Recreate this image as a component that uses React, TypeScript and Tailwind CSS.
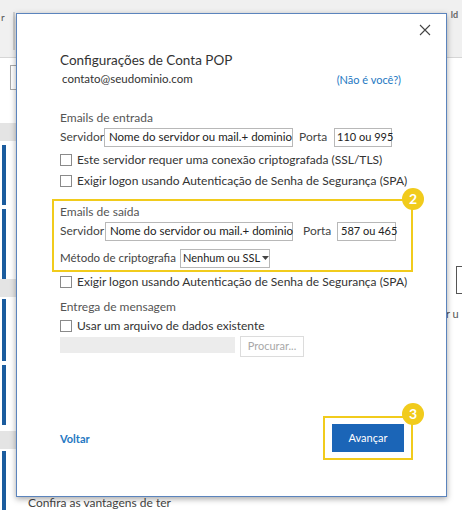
import React from "react";

const font = { fontFamily: 'Lato, "Open Sans", sans-serif' };

function Check({ label }: { label: string }) {
  return (
    <div className="flex h-[18px] items-center whitespace-nowrap">
      <div className="h-[12px] w-[12px] shrink-0 border border-[#8a8a8a] bg-white" />
      <span className="ml-[5px] text-[12px] text-[#333]">{label}</span>
    </div>
  );
}

function Badge({ n }: { n: string }) {
  return (
    <div className="flex h-[22px] w-[22px] items-center justify-center rounded-full bg-[#f1cb1c] text-[14px] font-bold leading-none text-white">
      {n}
    </div>
  );
}

export default function App() {
  return (
    <div className="relative h-[510px] w-[462px] overflow-hidden bg-white" style={font}>
      {/* background outlook window */}
      <div className="flex h-[58px] items-start border-b border-[#d6d6d6] bg-[#f0f0f0]">
        <span className="ml-[1px] mt-[10px] text-[10px] text-[#555]">r</span>
        <div className="ml-[8px] mt-[12px] h-[38px] w-[2px] bg-[#cfcfcf]" />
        <div className="ml-auto mr-[4px] mt-[8px] text-[9px] font-bold text-[#666]">ld</div>
      </div>
      <div className="flex">
        <div className="flex w-[16px] flex-col">
          <div className="ml-[10px] mt-[7px] h-[25px] w-[10px] border border-[#aaa] bg-white" />
          <div className="mt-[33px] h-[18px] bg-[#e4e4e4]" />
          <div className="ml-[2px] mt-[4px] h-[60px] w-[4px] bg-[#1b5c9e]" />
          <div className="ml-[2px] mt-[4px] h-[70px] w-[4px] bg-[#1b5c9e]" />
          <div className="h-[18px] bg-[#e4e4e4]" />
          <div className="ml-[2px] mt-[2px] h-[62px] w-[4px] bg-[#1b5c9e]" />
          <div className="ml-[2px] mt-[4px] h-[60px] w-[4px] bg-[#1b5c9e]" />
          <div className="mt-[6px] h-[18px] bg-[#e4e4e4]" />
          <div className="ml-[2px] mt-[2px] h-[60px] w-[4px] bg-[#1b5c9e]" />
        </div>
        <div className="flex-1" />
        <div className="flex w-[16px] flex-col">
          <div className="ml-[10px] mt-[208px] h-[28px] w-[10px] border border-r-0 border-[#555] bg-white" />
          <span className="mt-[12px] text-[11px] text-[#555]">r u</span>
        </div>
      </div>
      <div className="absolute left-[28px] top-[496px] whitespace-nowrap text-[12px] leading-[14px] text-[#444]">Confira as vantagens de ter</div>

      {/* dialog */}
      <div className="absolute left-[16px] top-[13px] flex h-[484px] w-[431px] flex-col border border-[#5b84bd] bg-white pl-[43px] shadow-[0_2px_6px_rgba(0,0,0,0.35)]">
        <div className="absolute right-[15px] top-[10px]">
          <svg width="12" height="12" viewBox="0 0 12 12">
            <path d="M1 1 L11 11 M11 1 L1 11" stroke="#444" strokeWidth="1.1" fill="none" />
          </svg>
        </div>
        <div className="mt-[36px] h-[20px] whitespace-nowrap text-[13.5px] leading-[20px] text-[#333]">Configurações de Conta POP</div>
        <div className="mt-[1px] flex h-[16px] items-center whitespace-nowrap pr-[45px]">
          <span className="ml-[2px] text-[11.5px] text-[#333]">contato@seudominio.com</span>
          <span className="ml-auto mt-[2px] text-[11px] text-[#2478c2]">(Não é você?)</span>
        </div>
        <div className="mt-[23px] h-[16px] text-[12px] leading-[16px] text-[#555]">Emails de entrada</div>
        <div className="mt-[1px] flex h-[20px] items-center whitespace-nowrap text-[12px] text-[#444]">
          <span className="w-[44px] shrink-0">Servidor</span>
          <div className="flex h-[19px] w-[189px] shrink-0 items-center border border-[#b8b8b8] px-[4px] text-[11.5px] text-[#222]">
            Nome do servidor ou mail.+ dominio
          </div>
          <span className="ml-[6px] w-[35px] shrink-0">Porta</span>
          <div className="flex h-[19px] w-[58px] shrink-0 items-center border border-[#b8b8b8] px-[2px] text-[11px] text-[#222]">110 ou 995</div>
        </div>
        <div className="mt-[4px]">
          <Check label="Este servidor requer uma conexão criptografada (SSL/TLS)" />
        </div>
        <div className="mt-[3px]">
          <Check label="Exigir logon usando Autenticação de Senha de Segurança (SPA)" />
        </div>

        <div className="relative ml-[-8px] mt-[9px] flex h-[73px] w-[361px] flex-col border-2 border-[#f1cb1c] pl-[6px]">
          <div className="absolute right-[-13px] top-[-13px]">
            <Badge n="2" />
          </div>
          <div className="mt-[3px] h-[16px] text-[12px] leading-[16px] text-[#555]">Emails de saída</div>
          <div className="mt-[1px] flex h-[20px] items-center whitespace-nowrap text-[12px] text-[#444]">
            <span className="w-[45px] shrink-0">Servidor</span>
            <div className="flex h-[19px] w-[188px] shrink-0 items-center border border-[#b8b8b8] px-[4px] text-[11.5px] text-[#222]">
              Nome do servidor ou mail.+ dominio
            </div>
            <span className="ml-[10px] w-[34px] shrink-0">Porta</span>
            <div className="flex h-[19px] w-[59px] shrink-0 items-center border border-[#b8b8b8] px-[3px] text-[11px] text-[#222]">587 ou 465</div>
          </div>
          <div className="mt-[7px] flex h-[20px] items-center whitespace-nowrap text-[11.5px] text-[#444]">
            <span className="w-[120px] shrink-0">Método de criptografia</span>
            <div className="flex h-[19px] w-[90px] shrink-0 items-center border border-[#b8b8b8] pl-[2px] text-[11px] text-[#222]">
              Nenhum ou SSL
              <svg width="7" height="4" viewBox="0 0 7 4" className="ml-[2px]">
                <path d="M0 0 L7 0 L3.5 4 Z" fill="#444" />
              </svg>
            </div>
          </div>
        </div>

        <div className="mt-[1px]">
          <Check label="Exigir logon usando Autenticação de Senha de Segurança (SPA)" />
        </div>
        <div className="mt-[8px] h-[16px] text-[12px] leading-[16px] text-[#555]">Entrega de mensagem</div>
        <div className="mt-[2px]">
          <Check label="Usar um arquivo de dados existente" />
        </div>
        <div className="mt-[1px] flex h-[21px] items-start">
          <div className="mt-[1px] h-[16px] w-[175px] bg-[#ececec]" />
          <div className="ml-[5px] flex h-[21px] w-[64px] items-center justify-center border border-[#dcdcdc] text-[11px] text-[#a8a8a8]">
            Procurar...
          </div>
        </div>

        <div className="mt-[59px] flex items-center pr-[33px]">
          <span className="mt-[2px] text-[11px] font-bold text-[#2478c2]">Voltar</span>
          <div className="relative ml-auto flex h-[44px] w-[90px] items-center justify-center border-2 border-[#f1cb1c]">
            <div className="absolute right-[-13px] top-[-15px]">
              <Badge n="3" />
            </div>
            <div className="flex h-[28px] w-[72px] items-center justify-center bg-[#1b65b7] text-[11px] text-white">
              Avançar
            </div>
          </div>
        </div>
      </div>
    </div>
  );
}
